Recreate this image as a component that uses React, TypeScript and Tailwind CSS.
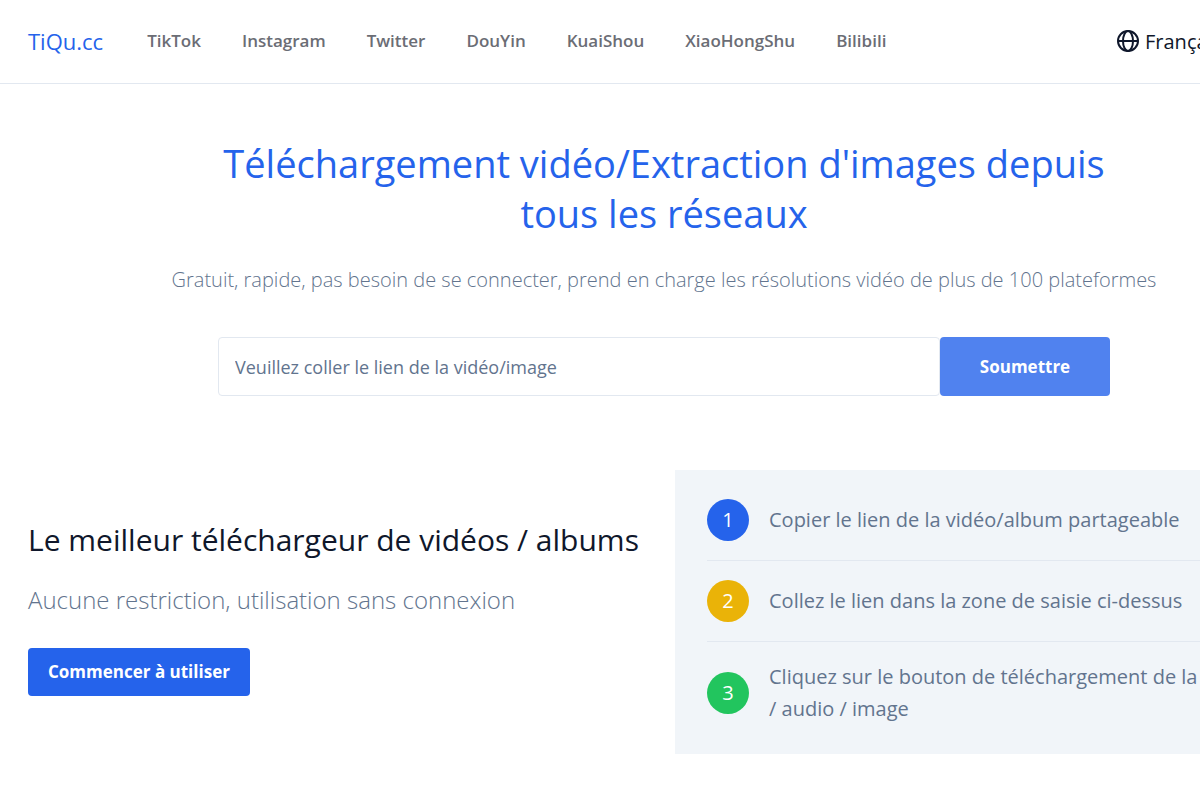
import { useState } from "react";

const platforms = [
  "TikTok",
  "Instagram",
  "Twitter",
  "DouYin",
  "KuaiShou",
  "XiaoHongShu",
  "Bilibili",
];

const steps = [
  { color: "bg-[#2563eb]", text: "Copier le lien de la vidéo/album partageable" },
  { color: "bg-[#eab308]", text: "Collez le lien dans la zone de saisie ci-dessus" },
  {
    color: "bg-[#22c55e]",
    text: "Cliquez sur le bouton de téléchargement de la vidéo /\u00a0audio / image",
  },
];

function GlobeIcon() {
  return (
    <svg
      viewBox="0 0 24 24"
      fill="none"
      stroke="currentColor"
      strokeWidth="2"
      className="size-6"
      aria-hidden="true"
    >
      <circle cx="12" cy="11" r="10" />
      <ellipse cx="12" cy="11" rx="5" ry="10" />
      <path d="M2 11h20" />
    </svg>
  );
}

function Header() {
  return (
    <header className="border-b border-slate-200">
      <div className="flex h-[83px] items-center px-7">
        <a href="#" className="text-[22px] text-[#2563eb]">
          TiQu.cc
        </a>
        <nav className="ml-11 flex items-center gap-[41px] pb-0.5">
          {platforms.map((name) => (
            <a key={name} href="#" className="text-[17px] font-semibold text-[#6b6d75]">
              {name}
            </a>
          ))}
        </nav>
        <button type="button" className="ml-auto flex w-[184px] items-center gap-[5px] text-xl">
          <GlobeIcon />
          <span>Français</span>
        </button>
      </div>
    </header>
  );
}

function Hero() {
  const [link, setLink] = useState("");

  return (
    <section className="flex flex-col items-center pt-[54px] text-center">
      <h1 className="max-w-[892px] text-[38px] leading-[50px] text-[#2563eb]">
        Téléchargement vidéo/Extraction d'images depuis tous les réseaux
      </h1>
      <p className="mt-7 text-xl leading-7 font-light text-slate-500">
        Gratuit, rapide, pas besoin de se connecter, prend en charge les résolutions vidéo de plus
        de 100 plateformes
      </p>
      <form
        className="mt-[43px] flex h-[59px] w-full max-w-[892px]"
        onSubmit={(e) => e.preventDefault()}
      >
        <input
          type="text"
          aria-label="Veuillez coller le lien de la vidéo/image"
          placeholder="Veuillez coller le lien de la vidéo/image"
          value={link}
          onChange={(e) => setLink(e.target.value)}
          className="min-w-0 flex-1 rounded border border-slate-200 px-4 text-lg placeholder:text-slate-500"
        />
        <button
          type="submit"
          className="w-[170px] rounded bg-[#5082ef] text-[17px] font-bold text-white"
        >
          Soumettre
        </button>
      </form>
    </section>
  );
}

function Guide() {
  return (
    <section className="mt-[74px] grid grid-cols-2 items-center gap-[22px] px-7">
      <div className="pb-2">
        <h2 className="text-3xl leading-10 whitespace-nowrap">
          Le meilleur téléchargeur de vidéos / albums
        </h2>
        <p className="mt-5 text-2xl leading-10 font-light text-slate-500">
          Aucune restriction, utilisation sans connexion
        </p>
        <button
          type="button"
          className="mt-7 h-12 rounded-sm bg-[#2563eb] px-5 text-[17px] font-bold text-white"
        >
          Commencer à utiliser
        </button>
      </div>
      <ol className="divide-y divide-slate-200 bg-slate-100 px-8 py-2.5">
        {steps.map((step, index) => (
          <li key={step.text} className="flex items-center gap-5 py-[19px]">
            <span
              className={`flex size-[42px] shrink-0 items-center justify-center rounded-full text-xl font-medium text-white ${step.color}`}
            >
              {index + 1}
            </span>
            <span className="text-xl leading-8 text-slate-500">{step.text}</span>
          </li>
        ))}
      </ol>
    </section>
  );
}

export default function App() {
  return (
    <div className="overflow-x-hidden bg-white">
      <div className="min-w-[1328px] pb-12 font-['Open_Sans','Noto_Sans',sans-serif] text-slate-900">
        <Header />
        <main>
          <Hero />
          <Guide />
        </main>
      </div>
    </div>
  );
}
